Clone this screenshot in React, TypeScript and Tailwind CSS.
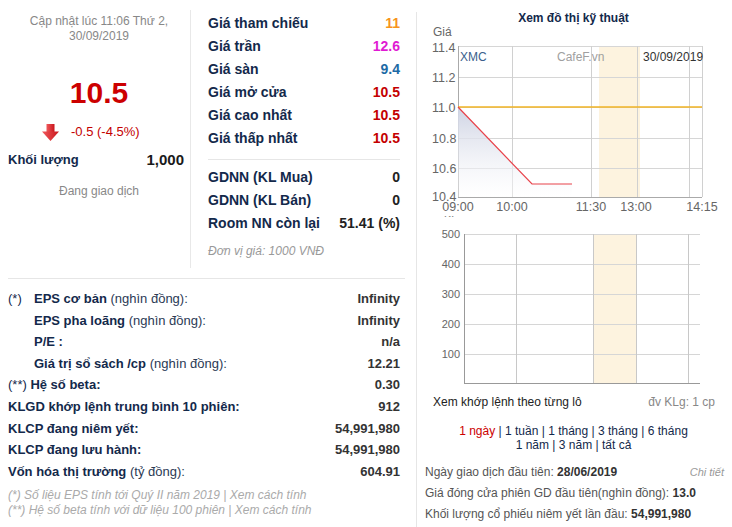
import React from 'react';

const font = { fontFamily: '"Liberation Sans", Arial, sans-serif' };

const priceRows = [
  { label: 'Giá tham chiếu', value: '11', color: 'text-[#f7941d]' },
  { label: 'Giá trần', value: '12.6', color: 'text-[#e01ad3]' },
  { label: 'Giá sàn', value: '9.4', color: 'text-[#1d6aa5]' },
  { label: 'Giá mở cửa', value: '10.5', color: 'text-[#c40000]' },
  { label: 'Giá cao nhất', value: '10.5', color: 'text-[#c40000]' },
  { label: 'Giá thấp nhất', value: '10.5', color: 'text-[#c40000]' },
];

const foreignRows = [
  { label: 'GDNN (KL Mua)', value: '0' },
  { label: 'GDNN (KL Bán)', value: '0' },
  { label: 'Room NN còn lại', value: '51.41 (%)' },
];

const DownArrow = () => (
  <svg width="17" height="17" viewBox="0 0 17 17">
    <defs>
      <linearGradient id="arr" x1="0" y1="0" x2="1" y2="0">
        <stop offset="0" stopColor="#f0595c" />
        <stop offset="1" stopColor="#c9161c" />
      </linearGradient>
    </defs>
    <rect x="4.5" y="0" width="8" height="8.5" fill="url(#arr)" />
    <polygon points="0,7.5 17,7.5 8.5,17" fill="url(#arr)" />
  </svg>
);

// price chart, drawn in page coordinates shifted by (417, 25)
const PriceChart = () => {
  const ox = 417;
  const oy = 25;
  const X = (x: number) => x - ox;
  const Y = (y: number) => y - oy;
  const yLabels = [
    ['11.4', 47],
    ['11.2', 77],
    ['11.0', 107],
    ['10.8', 138],
    ['10.6', 168],
    ['10.4', 196],
  ] as const;
  const xLabels = [
    ['09:00', 458],
    ['10:00', 512],
    ['11:30', 591],
    ['13:00', 636],
    ['14:15', 702],
  ] as const;
  return (
    <svg width="315" height="192" viewBox="0 0 315 192" style={font} className="block">
      <defs>
        <linearGradient id="area" x1="0" y1="0" x2="0" y2="1">
          <stop offset="0" stopColor="#ced3e3" />
          <stop offset="1" stopColor="#ffffff" stopOpacity="0.4" />
        </linearGradient>
      </defs>
      <text x={X(433)} y={Y(36)} fontSize="12" fill="#666">Giá</text>
      <rect x={X(599)} y={Y(46)} width={41} height={151} fill="#fdf3df" />
      {[46, 77, 107, 138, 168].map((y) => (
        <line key={y} x1={X(458)} x2={X(702)} y1={Y(y) + 0.5} y2={Y(y) + 0.5} stroke="#d6d6d6" />
      ))}
      {[512, 591, 637, 689, 702].map((x) => (
        <line key={x} x1={X(x) + 0.5} x2={X(x) + 0.5} y1={Y(46)} y2={Y(197)} stroke="#d0d0d0" />
      ))}
      <line x1={X(458)} x2={X(702)} y1={Y(197) + 0.5} y2={Y(197) + 0.5} stroke="#aaa" />
      <line x1={X(458) + 0.5} x2={X(458) + 0.5} y1={Y(46)} y2={Y(197)} stroke="#aaa" />
      {yLabels.map(([t, y]) => (
        <text key={t} x={X(432)} y={Y(y) + 4.5} fontSize="12.5" fill="#666">{t}</text>
      ))}
      <polygon
        points={`${X(458)},${Y(107)} ${X(532)},${Y(184)} ${X(572)},${Y(184)} ${X(572)},${Y(197)} ${X(458)},${Y(197)}`}
        fill="url(#area)"
      />
      <line x1={X(458)} x2={X(702)} y1={Y(107)} y2={Y(107)} stroke="#f0b323" strokeWidth="1.6" />
      <polyline
        points={`${X(458)},${Y(107)} ${X(532)},${Y(184)} ${X(572)},${Y(184)}`}
        fill="none"
        stroke="#e8424a"
        strokeWidth="1.2"
      />
      <text x={X(460)} y={Y(61)} fontSize="12" fill="#3a5f8c">XMC</text>
      <text x={X(557)} y={Y(61)} fontSize="12" fill="#a0a0a0">CafeF.vn</text>
      <text x={X(643)} y={Y(61)} fontSize="12" fill="#333">30/09/2019</text>
      {xLabels.map(([t, x]) => (
        <text key={t} x={X(x)} y={Y(211)} fontSize="12.5" fill="#666" textAnchor="middle">{t}</text>
      ))}
      <text x={X(444)} y={Y(224)} fontSize="11" fill="#777">KL</text>
    </svg>
  );
};

const VolumeChart = () => {
  const ox = 417;
  const oy = 225;
  const X = (x: number) => x - ox;
  const Y = (y: number) => y - oy;
  const yLabels = [
    ['500', 234],
    ['400', 264],
    ['300', 294],
    ['200', 324],
    ['100', 354],
  ] as const;
  return (
    <svg width="315" height="165" viewBox="0 0 315 165" style={font} className="block">
      <rect x={X(593)} y={Y(234)} width={43} height={149} fill="#fdf3df" />
      {[234, 264, 294, 324, 354].map((y) => (
        <line key={y} x1={X(464)} x2={X(700)} y1={Y(y) + 0.5} y2={Y(y) + 0.5} stroke="#d6d6d6" />
      ))}
      {[516, 593, 636, 688].map((x) => (
        <line key={x} x1={X(x) + 0.5} x2={X(x) + 0.5} y1={Y(234)} y2={Y(383)} stroke="#c8c8c8" />
      ))}
      <line x1={X(464)} x2={X(700)} y1={Y(383) + 0.5} y2={Y(383) + 0.5} stroke="#999" />
      <line x1={X(464) + 0.5} x2={X(464) + 0.5} y1={Y(234)} y2={Y(383)} stroke="#999" />
      {yLabels.map(([t, y]) => (
        <text key={t} x={X(460)} y={Y(y) + 4} fontSize="11" fill="#666" textAnchor="end">{t}</text>
      ))}
    </svg>
  );
};

const Label = ({ b, n }: { b: string; n?: string }) => (
  <span>
    <span className="font-bold text-[#13294b]">{b}</span>
    {n && <span className="text-[#2b3a55]"> {n}</span>}
  </span>
);

export default function App() {
  return (
    <div className="flex w-[732px] h-[527px] bg-white overflow-hidden" style={font}>
      {/* left panel */}
      <div className="w-[416px] flex flex-col">
        <div className="flex h-[268px]">
          <div className="w-[190px] flex flex-col pt-[14px] text-center">
            <div className="pl-[8px] text-[12px] leading-[15px] text-[#888]">
              Cập nhật lúc 11:06 Thứ 2,
              <br />
              30/09/2019
            </div>
            <div className="mt-[31px] pl-[8px] text-[30px] leading-[36px] font-bold text-[#cc0000]">10.5</div>
            <div className="mt-[12px] h-[18px] flex items-center pl-[42px] gap-[12px]">
              <DownArrow />
              <span className="text-[13px] text-[#c40000]">-0.5 (-4.5%)</span>
            </div>
            <div className="mt-[10px] h-[18px] flex items-center justify-between pl-[8px] pr-[6px]">
              <span className="text-[13px] font-bold text-[#13294b]">Khối lượng</span>
              <span className="text-[15px] font-bold text-[#1a1a1a]">1,000</span>
            </div>
            <div className="mt-[14px] pl-[8px] text-[12px] leading-[16px] text-[#888]">Đang giao dịch</div>
          </div>
          <div className="flex-1 mt-[10px] border-l border-[#e8e8e8] pl-[17px] pr-[16px] pt-[2px]">
            {priceRows.map((r) => (
              <div key={r.label} className="h-[23px] flex items-center justify-between text-[14px] font-bold">
                <span className="text-[#13294b]">{r.label}</span>
                <span className={r.color}>{r.value}</span>
              </div>
            ))}
            <div className="mt-[9px] border-t border-[#e6e6e6]" />
            <div className="mt-[6px]">
              {foreignRows.map((r) => (
                <div key={r.label} className="h-[23px] flex items-center justify-between text-[14px] font-bold">
                  <span className="text-[#13294b]">{r.label}</span>
                  <span className="text-[#222]">{r.value}</span>
                </div>
              ))}
            </div>
            <div className="mt-[4px] h-[23px] flex items-center text-[12px] italic text-[#999]">
              Đơn vị giá: 1000 VNĐ
            </div>
          </div>
        </div>
        <div className="mt-[10px] ml-[8px] mr-[11px] border-t border-[#e6e6e6]" />
        <div className="mt-[9px] pl-[8px] pr-[16px] text-[13px]">
          {[
            { pre: '(*)', b: 'EPS cơ bản', n: '(nghìn đồng):', v: 'Infinity' },
            { pre: '', b: 'EPS pha loãng', n: '(nghìn đồng):', v: 'Infinity' },
            { pre: '', b: 'P/E :', v: 'n/a' },
            { pre: '', b: 'Giá trị sổ sách /cp', n: '(nghìn đồng):', v: '12.21' },
          ].map((r) => (
            <div key={r.b} className="h-[21.6px] flex items-center justify-between">
              <div className="flex">
                <span className="w-[26px] text-[#13294b]">{r.pre}</span>
                <Label b={r.b} n={r.n} />
              </div>
              <span className="font-bold text-[#333]">{r.v}</span>
            </div>
          ))}
          <div className="h-[21.6px] flex items-center justify-between">
            <span>
              <span className="text-[#13294b]">(**) </span>
              <Label b="Hệ số beta:" />
            </span>
            <span className="font-bold text-[#333]">0.30</span>
          </div>
          {[
            { b: 'KLGD khớp lệnh trung bình 10 phiên:', v: '912' },
            { b: 'KLCP đang niêm yết:', v: '54,991,980' },
            { b: 'KLCP đang lưu hành:', v: '54,991,980' },
            { b: 'Vốn hóa thị trường', n: '(tỷ đồng):', v: '604.91' },
          ].map((r) => (
            <div key={r.b} className="h-[21.6px] flex items-center justify-between">
              <Label b={r.b} n={r.n} />
              <span className="font-bold text-[#333]">{r.v}</span>
            </div>
          ))}
          <div className="mt-[6px] text-[12px] leading-[15px] italic text-[#aaa]">
            <div>(*) Số liệu EPS tính tới Quý II năm 2019 | Xem cách tính</div>
            <div>(**) Hệ số beta tính với dữ liệu 100 phiên | Xem cách tính</div>
          </div>
        </div>
      </div>

      {/* right panel */}
      <div className="flex-1 mt-[12px] border-l border-[#e6e6e6] flex flex-col">
        <div className="text-center text-[12px] leading-[12px] font-bold text-[#13294b] pr-[2px]">
          Xem đồ thị kỹ thuật
        </div>
        <div className="mt-[1px]">
          <PriceChart />
        </div>
        <div className="mt-[8px]">
          <VolumeChart />
        </div>
        <div className="h-[24px] flex items-center justify-between pl-[16px] pr-[17px] text-[12px]">
          <span className="text-[#222]">Xem khớp lệnh theo từng lô</span>
          <span className="text-[#888]">đv KLg: 1 cp</span>
        </div>
        <div className="mt-[10px] text-center text-[12px] leading-[14px] text-[#13294b] pr-[2px]">
          <div>
            <span className="text-[#cc0000]">1 ngày</span> | 1 tuần | 1 tháng | 3 tháng | 6 tháng
          </div>
          <div>1 năm | 3 năm | tất cả</div>
        </div>
        <div className="mt-[9.5px] pl-[8px] pr-[8px] text-[12px] text-[#555]">
          <div className="h-[21px] flex items-center justify-between">
            <span>
              Ngày giao dịch đầu tiên: <b className="text-[#333]">28/06/2019</b>
            </span>
            <span className="italic text-[#999] text-[11px]">Chi tiết</span>
          </div>
          <div className="h-[21px] flex items-center">
            <span>
              Giá đóng cửa phiên GD đầu tiên(nghìn đồng): <b className="text-[#333]">13.0</b>
            </span>
          </div>
          <div className="h-[21px] flex items-center">
            <span>
              Khối lượng cổ phiếu niêm yết lần đầu: <b className="text-[#333]">54,991,980</b>
            </span>
          </div>
        </div>
      </div>
    </div>
  );
}
